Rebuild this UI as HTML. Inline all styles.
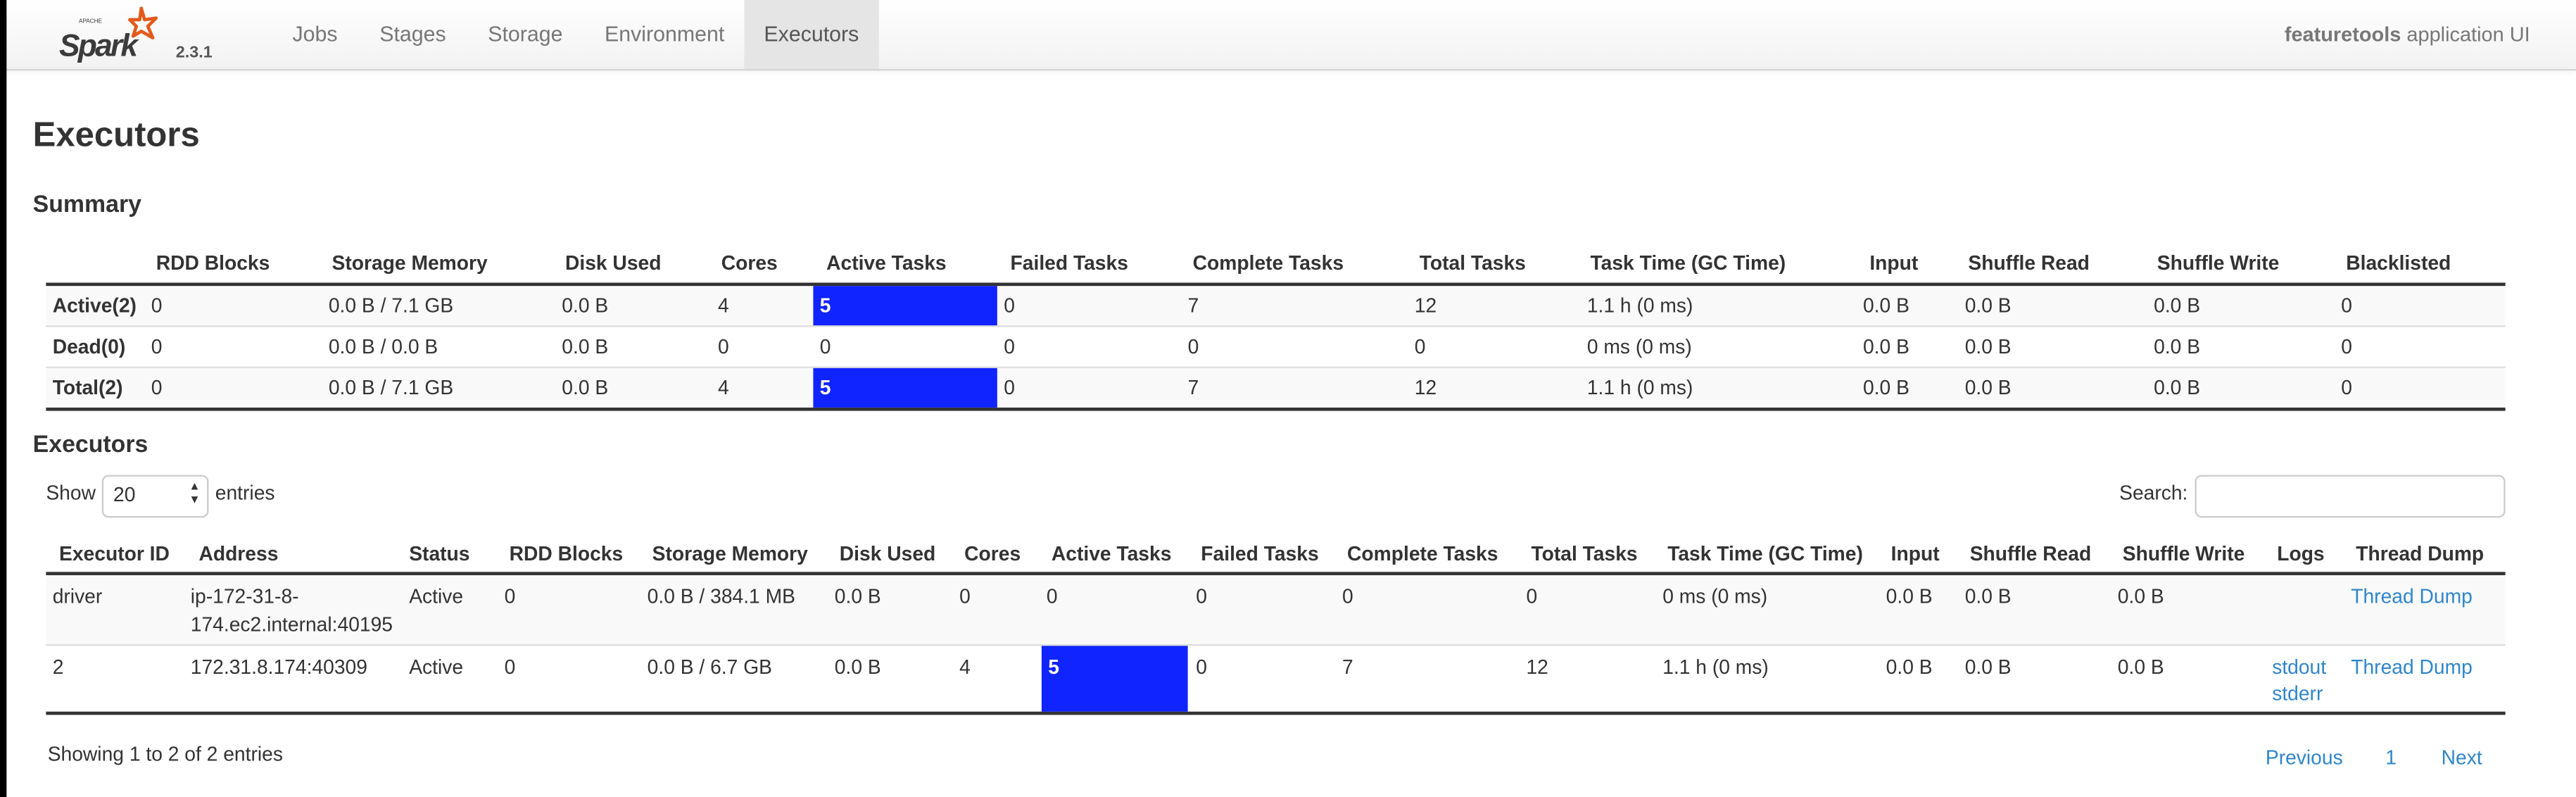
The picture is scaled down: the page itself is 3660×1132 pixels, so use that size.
<!DOCTYPE html>
<html><head><meta charset="utf-8"><style>
html,body{margin:0;padding:0;width:3660px;height:1132px;overflow:hidden;background:#fff}
#w{position:absolute;left:0;top:0;width:1568px;height:485px;transform:scale(2.3342);transform-origin:0 0;font-family:"Liberation Sans",Arial,sans-serif;font-size:12.1px;color:#333}
.a{position:absolute;white-space:nowrap;line-height:16px}
.b{font-weight:bold}
.l{color:#2f86c9}
.nav{position:absolute;left:0;top:0;width:1568px;height:42px;background:linear-gradient(#fff,#f2f2f2);border-bottom:1px solid #d4d4d4;box-shadow:0 1px 4px rgba(0,0,0,.06)}
.ni{color:#777;font-size:13px}
.bar{position:absolute;height:2px;background:#333}
.th{position:absolute;height:1px;background:#ddd}
.st{position:absolute;background:#f9f9f9}
.blue{position:absolute;background:#1024ff}
</style></head><body><div id="w">
<div class="nav"></div>
<div style="position:absolute;left:453px;top:0;width:82px;height:42px;background:#e5e5e5"></div>
<svg style="position:absolute;left:36px;top:3px" width="70" height="40" viewBox="0 0 70 40">
<text x="12" y="11" font-size="3.5" fill="#333" font-family="Liberation Sans">APACHE</text>
<text x="0" y="31" font-size="19" font-style="italic" font-weight="bold" fill="#3b3b3b" font-family="Liberation Sans" letter-spacing="-1.2">Spark</text>
<path d="M50 2 L52 9 L59 8 L54 13 L57 20 L50 16 L45 19 L47 13 L43 9 L49 9 Z" fill="none" stroke="#e25a1c" stroke-width="2" stroke-linejoin="round"/>
</svg>
<div class="a b" style="left:107px;top:25px;font-size:10px;color:#555">2.3.1</div>
<div class="a ni" style="left:178px;top:13px">Jobs</div>
<div class="a ni" style="left:231px;top:13px">Stages</div>
<div class="a ni" style="left:297px;top:13px">Storage</div>
<div class="a ni" style="left:368px;top:13px">Environment</div>
<div class="a ni" style="left:465px;top:13px;color:#555">Executors</div>
<div class="a ni" style="right:28px;top:13px;font-size:12.4px"><b>featuretools</b> application UI</div>

<div class="a b" style="left:20px;top:70px;font-size:21px;line-height:26px">Executors</div>
<div class="a b" style="left:20px;top:117px;font-size:14.5px">Summary</div>

<div class="st" style="left:28px;top:174px;width:1497px;height:24px"></div>
<div class="st" style="left:28px;top:224px;width:1497px;height:24px"></div>
<div class="th" style="left:28px;top:198px;width:1497px"></div>
<div class="th" style="left:28px;top:223px;width:1497px"></div>
<div class="bar" style="left:28px;top:172px;width:1497px"></div>
<div class="bar" style="left:28px;top:248px;width:1497px"></div>
<div class="blue" style="left:495px;top:174px;width:112px;height:24px"></div>
<div class="blue" style="left:495px;top:224px;width:112px;height:24px"></div>
<div class="a b" style="left:95px;top:152px">RDD Blocks</div>
<div class="a b" style="left:202px;top:152px">Storage Memory</div>
<div class="a b" style="left:344px;top:152px">Disk Used</div>
<div class="a b" style="left:439px;top:152px">Cores</div>
<div class="a b" style="left:503px;top:152px">Active Tasks</div>
<div class="a b" style="left:615px;top:152px">Failed Tasks</div>
<div class="a b" style="left:726px;top:152px">Complete Tasks</div>
<div class="a b" style="left:864px;top:152px">Total Tasks</div>
<div class="a b" style="left:968px;top:152px">Task Time (GC Time)</div>
<div class="a b" style="left:1138px;top:152px">Input</div>
<div class="a b" style="left:1198px;top:152px">Shuffle Read</div>
<div class="a b" style="left:1313px;top:152px">Shuffle Write</div>
<div class="a b" style="left:1428px;top:152px">Blacklisted</div>

<div class="a b" style="left:32px;top:178px">Active(2)</div>
<div class="a b" style="left:32px;top:203px">Dead(0)</div>
<div class="a b" style="left:32px;top:228px">Total(2)</div>

<div class="a" style="left:92px;top:178px">0</div><div class="a" style="left:200px;top:178px">0.0 B / 7.1 GB</div><div class="a" style="left:342px;top:178px">0.0 B</div><div class="a" style="left:437px;top:178px">4</div><div class="a b" style="left:499px;top:178px;color:#fff">5</div><div class="a" style="left:611px;top:178px">0</div><div class="a" style="left:723px;top:178px">7</div><div class="a" style="left:861px;top:178px">12</div><div class="a" style="left:966px;top:178px">1.1 h (0 ms)</div><div class="a" style="left:1134px;top:178px">0.0 B</div><div class="a" style="left:1196px;top:178px">0.0 B</div><div class="a" style="left:1311px;top:178px">0.0 B</div><div class="a" style="left:1425px;top:178px">0</div>

<div class="a" style="left:92px;top:203px">0</div><div class="a" style="left:200px;top:203px">0.0 B / 0.0 B</div><div class="a" style="left:342px;top:203px">0.0 B</div><div class="a" style="left:437px;top:203px">0</div><div class="a" style="left:499px;top:203px">0</div><div class="a" style="left:611px;top:203px">0</div><div class="a" style="left:723px;top:203px">0</div><div class="a" style="left:861px;top:203px">0</div><div class="a" style="left:966px;top:203px">0 ms (0 ms)</div><div class="a" style="left:1134px;top:203px">0.0 B</div><div class="a" style="left:1196px;top:203px">0.0 B</div><div class="a" style="left:1311px;top:203px">0.0 B</div><div class="a" style="left:1425px;top:203px">0</div>

<div class="a" style="left:92px;top:228px">0</div><div class="a" style="left:200px;top:228px">0.0 B / 7.1 GB</div><div class="a" style="left:342px;top:228px">0.0 B</div><div class="a" style="left:437px;top:228px">4</div><div class="a b" style="left:499px;top:228px;color:#fff">5</div><div class="a" style="left:611px;top:228px">0</div><div class="a" style="left:723px;top:228px">7</div><div class="a" style="left:861px;top:228px">12</div><div class="a" style="left:966px;top:228px">1.1 h (0 ms)</div><div class="a" style="left:1134px;top:228px">0.0 B</div><div class="a" style="left:1196px;top:228px">0.0 B</div><div class="a" style="left:1311px;top:228px">0.0 B</div><div class="a" style="left:1425px;top:228px">0</div>

<div class="a b" style="left:20px;top:263px;font-size:14.5px">Executors</div>
<div class="a" style="left:28px;top:292px">Show</div>
<div style="position:absolute;left:62px;top:289px;width:63px;height:24px;border:1px solid #ccc;border-radius:4px;background:#fff"></div>
<div class="a" style="left:69px;top:293px">20</div>
<div class="a" style="left:115px;top:293px;font-size:7px;line-height:8px">▲<br>▼</div>
<div class="a" style="left:131px;top:292px">entries</div>
<div class="a" style="left:1290px;top:292px">Search:</div>
<div style="position:absolute;left:1336px;top:289px;width:187px;height:24px;border:1px solid #ccc;border-radius:4px;background:#fff"></div>

<div class="st" style="left:28px;top:350px;width:1497px;height:42px"></div>
<div class="th" style="left:28px;top:392px;width:1497px"></div>
<div class="bar" style="left:28px;top:348px;width:1497px"></div>
<div class="bar" style="left:28px;top:433px;width:1497px"></div>
<div class="blue" style="left:634px;top:393px;width:89px;height:40px"></div>
<div class="a b" style="left:36px;top:329px">Executor ID</div>
<div class="a b" style="left:121px;top:329px">Address</div>
<div class="a b" style="left:249px;top:329px">Status</div>
<div class="a b" style="left:310px;top:329px">RDD Blocks</div>
<div class="a b" style="left:397px;top:329px">Storage Memory</div>
<div class="a b" style="left:511px;top:329px">Disk Used</div>
<div class="a b" style="left:587px;top:329px">Cores</div>
<div class="a b" style="left:640px;top:329px">Active Tasks</div>
<div class="a b" style="left:731px;top:329px">Failed Tasks</div>
<div class="a b" style="left:820px;top:329px">Complete Tasks</div>
<div class="a b" style="left:932px;top:329px">Total Tasks</div>
<div class="a b" style="left:1015px;top:329px">Task Time (GC Time)</div>
<div class="a b" style="left:1151px;top:329px">Input</div>
<div class="a b" style="left:1199px;top:329px">Shuffle Read</div>
<div class="a b" style="left:1292px;top:329px">Shuffle Write</div>
<div class="a b" style="left:1386px;top:329px">Logs</div>
<div class="a b" style="left:1434px;top:329px">Thread Dump</div>

<div class="a" style="left:32px;top:355px">driver</div><div class="a" style="left:116px;top:355px">ip-172-31-8-</div><div class="a" style="left:116px;top:372px">174.ec2.internal:40195</div><div class="a" style="left:249px;top:355px">Active</div><div class="a" style="left:307px;top:355px">0</div><div class="a" style="left:394px;top:355px">0.0 B / 384.1 MB</div><div class="a" style="left:508px;top:355px">0.0 B</div><div class="a" style="left:584px;top:355px">0</div><div class="a" style="left:637px;top:355px">0</div><div class="a" style="left:728px;top:355px">0</div><div class="a" style="left:817px;top:355px">0</div><div class="a" style="left:929px;top:355px">0</div><div class="a" style="left:1012px;top:355px">0 ms (0 ms)</div><div class="a" style="left:1148px;top:355px">0.0 B</div><div class="a" style="left:1196px;top:355px">0.0 B</div><div class="a" style="left:1289px;top:355px">0.0 B</div><div class="a l" style="left:1431px;top:355px">Thread Dump</div>

<div class="a" style="left:32px;top:398px">2</div><div class="a" style="left:116px;top:398px">172.31.8.174:40309</div><div class="a" style="left:249px;top:398px">Active</div><div class="a" style="left:307px;top:398px">0</div><div class="a" style="left:394px;top:398px">0.0 B / 6.7 GB</div><div class="a" style="left:508px;top:398px">0.0 B</div><div class="a" style="left:584px;top:398px">4</div><div class="a b" style="left:638px;top:398px;color:#fff">5</div><div class="a" style="left:728px;top:398px">0</div><div class="a" style="left:817px;top:398px">7</div><div class="a" style="left:929px;top:398px">12</div><div class="a" style="left:1012px;top:398px">1.1 h (0 ms)</div><div class="a" style="left:1148px;top:398px">0.0 B</div><div class="a" style="left:1196px;top:398px">0.0 B</div><div class="a" style="left:1289px;top:398px">0.0 B</div><div class="a l" style="left:1383px;top:398px">stdout</div><div class="a l" style="left:1383px;top:414px">stderr</div><div class="a l" style="left:1431px;top:398px">Thread Dump</div>

<div class="a" style="left:29px;top:451px">Showing 1 to 2 of 2 entries</div>
<div class="a l" style="left:1379px;top:453px">Previous</div>
<div class="a l" style="left:1452px;top:453px">1</div>
<div class="a l" style="left:1486px;top:453px">Next</div>

<div style="position:absolute;left:0;top:0;width:4px;height:485px;background:#000"></div>
</div></body></html>
